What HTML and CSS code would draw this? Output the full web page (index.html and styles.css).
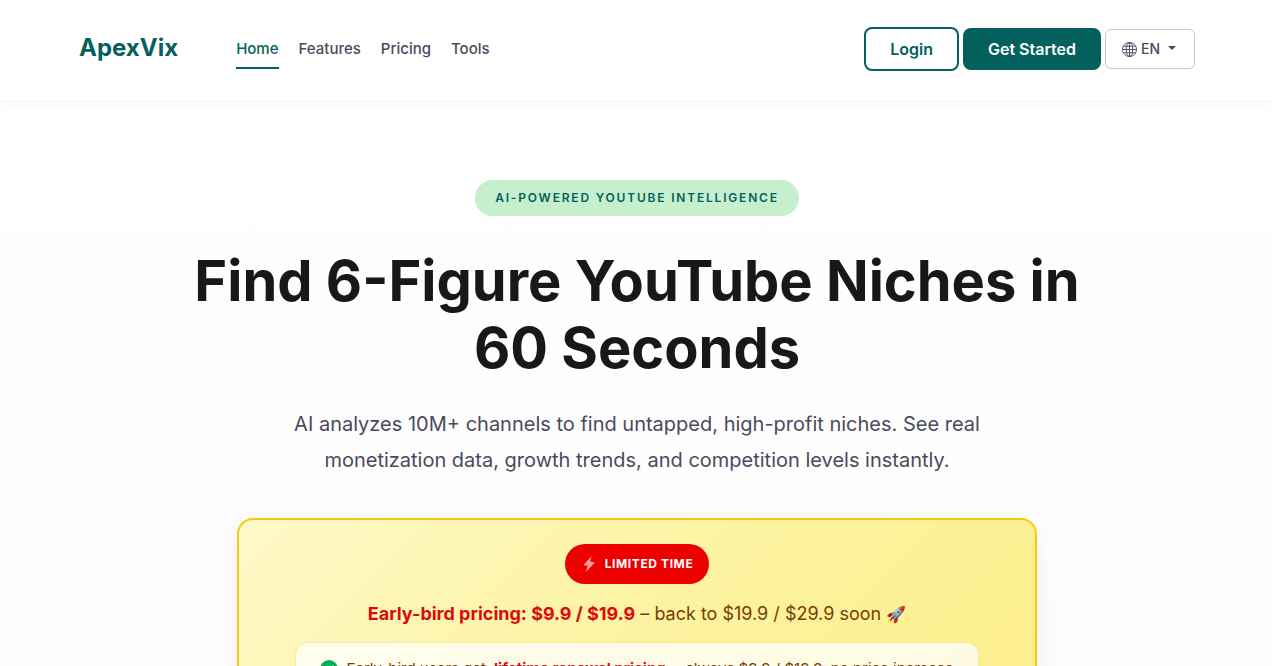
FILE: index.html
```html
<!DOCTYPE html>
<html lang="en">

<head>
    <meta charset="UTF-8">
    <meta name="viewport" content="width=device-width, initial-scale=1.0">
    <title>ApexVix</title>
    <link rel="stylesheet" href="styles.css">
</head>

<body>

    <header class="site-header">
        <div class="container header-inner">
            <a class="brand" href="#">ApexVix</a>
            <nav class="main-nav">
                <a class="nav-link active" href="#">Home</a>
                <a class="nav-link" href="#">Features</a>
                <a class="nav-link" href="#">Pricing</a>
                <a class="nav-link" href="#">Tools</a>
            </nav>
            <div class="header-actions">
                <a class="btn btn-outline" href="#">Login</a>
                <a class="btn btn-primary" href="#">Get Started</a>
                <button type="button" class="btn-lang">
                    <svg class="icon-globe" viewBox="0 0 16 16" fill="none" stroke="currentColor" aria-hidden="true">
                        <circle cx="8" cy="8" r="7.5" />
                        <ellipse cx="8" cy="8" rx="3.5" ry="7.5" />
                        <path d="M8 .5v15M.5 8h15M1.7 4.5h12.6M1.7 11.5h12.6" />
                    </svg>
                    <span>EN</span>
                    <span class="caret"></span>
                </button>
            </div>
        </div>
    </header>

    <main class="hero">
        <div class="container hero-inner">
            <span class="hero-badge">AI-Powered YouTube Intelligence</span>
            <h1>Find 6-Figure YouTube Niches in 60 Seconds</h1>
            <p class="lead">AI analyzes 10M+ channels to find untapped, high-profit niches. See real monetization data, growth trends, and competition levels instantly.</p>

            <section class="promo">
                <span class="promo-tag">
                    <svg class="icon-bolt" viewBox="0 0 16 16" fill="currentColor" aria-hidden="true">
                        <path d="M10.6 0L2.2 9.2l4.4.6L4.8 16l9.2-9.6-4.8-.8z" />
                    </svg>
                    Limited Time
                </span>
                <p class="promo-text"><strong>Early-bird pricing: $9.9 / $19.9</strong> – back to $19.9 / $29.9 soon <span class="emoji">🚀</span></p>
                <div class="promo-note">
                    <svg class="icon-check" viewBox="0 0 16 16" aria-hidden="true">
                        <circle cx="8" cy="8" r="8" fill="#00b050" />
                        <path d="M4.6 8.4l2.4 2.4 4.6-5.4" fill="none" stroke="#fff" stroke-width="1.5" stroke-linecap="round" stroke-linejoin="round" />
                    </svg>
                    <span>Early-bird users get</span>
                    <strong>lifetime renewal pricing</strong>
                    <span>– always $9.9 / $19.9, no price increase</span>
                </div>
            </section>
        </div>
    </main>

</body>

</html>
```
FILE: styles.css
```css
* {
    box-sizing: border-box;
}

body {
    margin: 0;
    font-family: Inter, "Liberation Sans", sans-serif;
    font-size: 16px;
    color: #4a4a5e;
    background: linear-gradient(180deg, #fff, #fcfcfc);
}

a {
    text-decoration: none;
}

.container {
    max-width: 1140px;
    margin: 0 auto;
    padding: 0 11px 0 13px;
}

/* Header */
.site-header {
    background-color: #fff;
    box-shadow: 0 2px 8px rgba(0, 0, 0, 0.05);
    padding: 27px 0 29px;
}

.header-inner {
    display: flex;
    align-items: center;
}

.brand {
    padding-bottom: 3px;
    font-size: 24px;
    font-weight: 700;
    color: #04605c;
}

.main-nav {
    display: flex;
    gap: 20px;
    margin-left: 58px;
}

.nav-link {
    padding: 9px 0 7px;
    border-bottom: 2px solid transparent;
    font-size: 15px;
    line-height: 22px;
    font-weight: 500;
    color: #4a4a5e;
}

.nav-link.active {
    color: #04605c;
    border-color: #04605c;
}

.header-actions {
    display: flex;
    align-items: center;
    gap: 4px;
    margin-left: auto;
}

.btn {
    padding: 9px 25px;
    border-radius: 8px;
    font-size: 16px;
    line-height: 24px;
    font-weight: 600;
}

.btn-outline {
    padding: 8px 24px;
    border: 2px solid #04605c;
    color: #04605c;
    background-color: #fff;
}

.btn-primary {
    color: #fff;
    background-color: #04605c;
}

.btn-lang {
    display: flex;
    align-items: center;
    gap: 4px;
    padding: 8px 16px;
    border: 1px solid #b8cfcc;
    border-radius: 6px;
    background-color: #fff;
    color: #4a4a5e;
    font-family: inherit;
    font-size: 14px;
    line-height: 22px;
    font-weight: 500;
    cursor: pointer;
}

.icon-globe {
    width: 15px;
    height: 15px;
}

.caret {
    margin: 0 2px 2px 4px;
    border-top: 4px solid currentColor;
    border-left: 4px solid transparent;
    border-right: 4px solid transparent;
}

/* Hero */
.hero {
    padding: 80px 0;
}

.hero-inner {
    display: flex;
    flex-direction: column;
    align-items: center;
    text-align: center;
}

.hero-badge {
    padding: 8px 20px;
    border-radius: 20px;
    background-color: #c6efce;
    color: #04605c;
    font-size: 12px;
    line-height: 20px;
    font-weight: 600;
    letter-spacing: 0.15em;
    text-transform: uppercase;
}

h1 {
    max-width: 900px;
    margin: 32px 0 24px;
    font-size: 56px;
    line-height: 67px;
    font-weight: 700;
    color: #16181a;
}

.lead {
    max-width: 700px;
    margin: 0 0 40px;
    font-size: 20px;
    line-height: 36px;
}

/* Promo card */
.promo {
    display: flex;
    flex-direction: column;
    align-items: center;
    width: 100%;
    max-width: 800px;
    padding: 24px;
    border: 2px solid #f8c810;
    border-radius: 16px;
    background: linear-gradient(135deg, #fef9c8, #fcf3a2 50%, #fdee8a);
    box-shadow: 0 8px 24px rgba(0, 0, 0, 0.06);
    color: #783c04;
}

.promo-tag {
    display: flex;
    align-items: center;
    gap: 8px;
    padding: 8px 16px;
    border-radius: 20px;
    background-color: #ec0000;
    color: #fff;
    font-size: 12px;
    line-height: 24px;
    font-weight: 700;
    letter-spacing: 0.05em;
    text-transform: uppercase;
}

.icon-bolt {
    width: 16px;
    height: 16px;
    opacity: 0.6;
}

.promo-text {
    margin: 16px 0 14px;
    font-size: 18px;
    line-height: 27px;
}

.emoji {
    font-size: 16px;
}

.promo strong {
    font-weight: 700;
    color: #dc0a0a;
}

.promo-note {
    display: flex;
    align-items: center;
    gap: 8px;
    padding: 13px 24px;
    border: 1px solid #fae896;
    border-radius: 12px;
    background-color: rgba(255, 255, 255, 0.75);
    font-size: 15px;
    line-height: 26px;
}

.icon-check {
    width: 18px;
    height: 18px;
}
```
